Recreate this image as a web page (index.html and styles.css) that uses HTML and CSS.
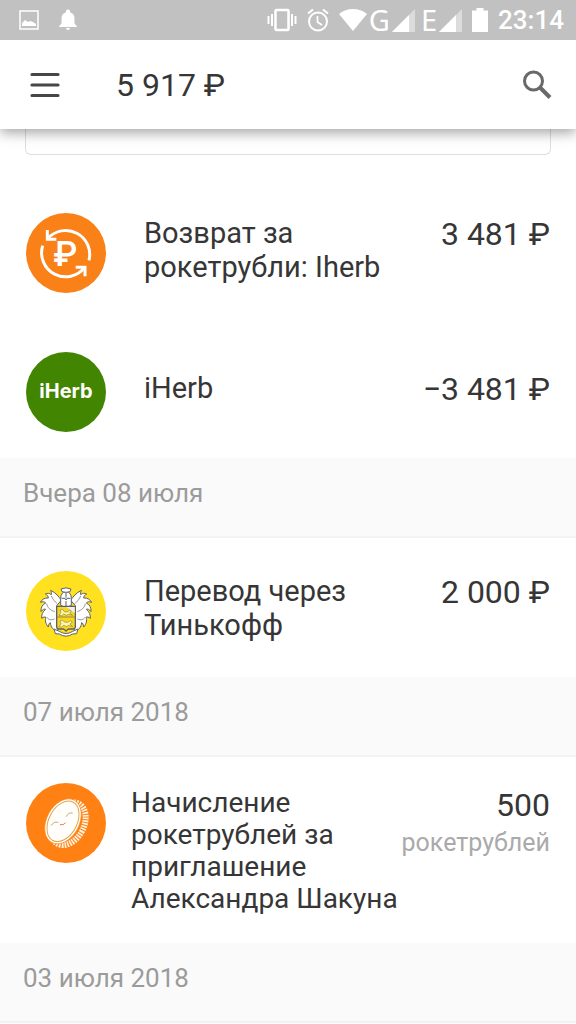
FILE: index.html
```html
<!DOCTYPE html>
<html lang="ru">
<head>
    <meta charset="UTF-8">
    <meta name="viewport" content="width=device-width, initial-scale=1.0">
    <title>История операций</title>
    <link rel="stylesheet" href="styles.css">
</head>
<body>

    <!-- Status bar -->
    <div class="status">
        <div class="status-left">
            <svg width="20" height="20" viewBox="0 0 20 20">
                <rect x="1" y="1" width="18" height="18" fill="none" stroke="#fff" stroke-width="1.5"/>
                <path d="M3 16v-3l3-3 3 2 2-1 3 1 3 2v2z" fill="#fff"/>
            </svg>
            <svg width="18" height="22" viewBox="0 0 18 22">
                <path d="M9 0.5c1.2 0 2 .8 2 2v.8c2.900.8 4.500 3.200 4.500 6.200v5l2.200 2.500v1H.3v-1l2.200-2.500v-5c0-3 1.600-5.400 4.500-6.200v-.8c0-1.200.8-2 2-2zM7 19h4c0 1.200-.9 2-2 2s-2-.8-2-2z" fill="#fff"/>
            </svg>
        </div>
        <div class="status-right">
            <svg width="30" height="24" viewBox="0 0 30 24">
                <rect x="8.500" y="2" width="13" height="20" rx="1" fill="none" stroke="#fff" stroke-width="2.500"/>
                <path d="M1.500 8v8M5 6v12M25 6v12M28.500 8v8" stroke="#fff" stroke-width="2"/>
            </svg>
            <svg width="22" height="24" viewBox="0 0 22 24">
                <circle cx="11" cy="13.500" r="9" fill="none" stroke="#fff" stroke-width="2"/>
                <path d="M10.500 8v6l4.500 3" fill="none" stroke="#fff" stroke-width="1.700"/>
                <path d="M1 5.500L6 1.500M21 5.500L16 1.500" stroke="#fff" stroke-width="2.200"/>
            </svg>
            <svg width="28" height="24" viewBox="0 0 28 24">
                <path d="M0 6C8-.7 20-.7 28 6L14 23z" fill="#fff"/>
            </svg>
            <span class="network">G
                <svg width="23" height="23" viewBox="0 0 23 23">
                    <path d="M23 0V23H0z" fill="#dcdcdc"/>
                    <path d="M17 6V23H0z" fill="#fff"/>
                </svg>
            </span>
            <span class="network">E
                <svg width="23" height="23" viewBox="0 0 23 23">
                    <path d="M23 0V23H0z" fill="#dcdcdc"/>
                    <path d="M17 6V23H0z" fill="#fff"/>
                </svg>
            </span>
            <svg width="16" height="24" viewBox="0 0 16 24">
                <path d="M4.500 0h7v2.500H16V24H0V2.500h4.500z" fill="#fff"/>
            </svg>
            <span class="clock">23:14</span>
        </div>
    </div>

    <header class="header">
        <button class="menu" aria-label="Меню">
            <svg width="30" height="28" viewBox="0 0 30 28">
                <path d="M2 3.500h26M2 14h26M2 24.500h26" stroke="#464646" stroke-width="3.200" stroke-linecap="round"/>
            </svg>
        </button>
        <h1>5 917 ₽</h1>
        <button class="search" aria-label="Поиск">
            <svg width="30" height="30" viewBox="0 0 30 30">
                <circle cx="11.500" cy="11" r="9" fill="none" stroke="#696969" stroke-width="3"/>
                <path d="M18 17.500l10 10" stroke="#696969" stroke-width="4"/>
            </svg>
        </button>
    </header>

    <main>
        <div class="card"></div>

        <div class="row">
            <svg class="icon" viewBox="0 0 240 240">
                <circle cx="120" cy="120" r="120" fill="#f98118"/>
                <g fill="none" stroke="#fff" stroke-width="9">
                    <path d="M189 142A72 72 0 0 0 65 77"/>
                    <path d="M64 51v28h27"/>
                    <path d="M50 98A72 72 0 0 0 176 163"/>
                    <path d="M149 163h28v27"/>
                </g>
                <text class="ruble" x="118" y="158">₽</text>
            </svg>
            <div class="info">
                <p class="name">Возврат за рокетрубли: Iherb</p>
                <p class="amount">3 481 ₽</p>
            </div>
        </div>

        <div class="row">
            <div class="icon iherb">iHerb</div>
            <div class="info">
                <p class="name">iHerb</p>
                <p class="amount">−3 481 ₽</p>
            </div>
        </div>

        <h2>Вчера 08 июля</h2>

        <div class="row">
            <svg class="icon" viewBox="0 0 240 240">
                <defs>
                    <g id="leaves">
                        <path d="M106 88C98 76 90 66 74 58C76 64 77 68 76 71C70 66 64 66 58 69C64 72 67 76 67 81C56 80 48 85 43 94C50 91 56 92 59 96C49 100 44 110 45 122C50 115 55 113 59 115C50 122 46 132 47 142C52 138 57 137 60 139C56 148 59 159 67 168C68 160 70 156 73 155C74 168 82 178 94 181L100 160L92 104z"/>
                        <path d="M76 75C80 84 86 92 94 98M62 98C64 110 74 118 86 122M63 139C68 147 76 148 86 144" fill="none" stroke-width="2"/>
                    </g>
                </defs>
                <circle cx="120" cy="120" r="120" fill="#ffe11f"/>
                <g fill="#fff" stroke="#5d5f6c" stroke-width="3" stroke-linejoin="round">
                    <use href="#leaves"/>
                    <use href="#leaves" transform="translate(240 0) scale(-1 1)"/>
                    <path d="M84 174l16 7q20 13 40 0l16-7-4 14-12 1q-20 13-40 0l-12-1z"/>
                    <path d="M104 103V82q0-18 16-20q16 2 16 20v21l-16 7z"/>
                    <path d="M105 54q15-7 30 0l-3 8q-12 4-24 0z"/>
                    <path d="M107 82h10l3 5 3-5h10M120 66v14M120 90v17" fill="none"/>
                    <path d="M92 106h56v61q0 7-8 7h-13l-7 6-7-6h-13q-8 0-8-7z" fill="#f7d91c" stroke-width="4"/>
                    <path d="M121 108h25v18z" fill="#eeeef0" stroke="none"/>
                    <path d="M94 138h52" fill="none" stroke-width="2"/>
                    <path d="M99 133l6-9-3-7 8-2 5 7 10 1 5-6 6 3-5 6 9 7-11-3-8 3-8-4-6 5z" fill="#fff6a8" stroke="#8b8149" stroke-width="2"/>
                    <path d="M99 167l6-9-3-8 7-3 6 6 10 1 8-5 6 4-7 6 8 8-12-4-6 4-9-4-6 5z" fill="#fff6a8" stroke="#8b8149" stroke-width="2"/>
                </g>
            </svg>
            <div class="info">
                <p class="name">Перевод через Тинькофф</p>
                <p class="amount">2 000 ₽</p>
            </div>
        </div>

        <h2>07 июля 2018</h2>

        <div class="row bonus">
            <svg class="icon" viewBox="0 0 240 240">
                <circle cx="120" cy="120" r="120" fill="#ff8114"/>
                <g transform="rotate(28 124 123)">
                    <ellipse cx="126" cy="121" rx="47" ry="68" fill="none" stroke="#fff2dc" stroke-width="18" stroke-dasharray="5 3"/>
                </g>
                <g transform="rotate(28 111 115)">
                    <ellipse cx="111" cy="115" rx="49" ry="72" fill="#fff" stroke="#ff8114" stroke-width="2"/>
                    <ellipse cx="111" cy="115" rx="42" ry="65" fill="#fffefa" stroke="#dfa64a" stroke-width="3"/>
                </g>
                <path d="M76 127q7-13 20-9M121 100q5-12 18-10" fill="none" stroke="#c8ac7c" stroke-width="3" stroke-linecap="round"/>
                <path d="M103 125q9 4 15-5" fill="none" stroke="#ee7c5c" stroke-width="3" stroke-linecap="round"/>
            </svg>
            <div class="info">
                <p class="name">Начисление рокетрублей за приглашение Александра Шакуна</p>
                <p class="amount">500 <small>рокетрублей</small></p>
            </div>
        </div>

        <h2>03 июля 2018</h2>
    </main>

</body>
</html>
```
FILE: styles.css
```css
* {
    margin: 0;
    padding: 0;
    box-sizing: border-box;
}

body {
    background-color: #fff;
    color: #363636;
    font-family: Roboto, sans-serif;
}

svg {
    display: block;
    flex-shrink: 0;
}

button {
    background: none;
    border: none;
    cursor: pointer;
}

/* Status bar */
.status {
    display: flex;
    justify-content: space-between;
    align-items: center;
    height: 40px;
    padding: 0 12px 0 19px;
    background-color: #c1c1c1;
    color: #fff;
}

.status-left {
    display: flex;
    align-items: center;
    gap: 20px;
}

.status-right {
    display: flex;
    align-items: center;
    gap: 10px;
}

.network {
    display: flex;
    align-items: center;
    gap: 2px;
    margin-left: -8px;
    font-family: "Noto Sans", sans-serif;
    font-size: 29px;
    line-height: 40px;
}

.network + .network {
    margin-left: -4px;
}

.clock {
    font-size: 26px;
    font-weight: 500;
    line-height: 40px;
}

/* Header */
.header {
    position: relative;
    display: flex;
    align-items: center;
    height: 89px;
    padding: 0 24px 0 30px;
    background-color: #fff;
    box-shadow: 0 4px 12px rgba(0, 0, 0, 0.35);
    clip-path: inset(0 0 -24px);
}

.header h1 {
    flex: 1;
    margin-left: 56px;
    font-size: 32px;
    font-weight: 400;
    line-height: 36px;
}

.card {
    height: 26px;
    margin: 0 25px 25px;
    border: 1px solid #dedede;
    border-top: none;
    border-radius: 0 0 6px 6px;
}

/* Operations */
.row {
    display: flex;
    align-items: center;
    gap: 38px;
    padding: 33px 26px 26px;
}

.icon {
    width: 80px;
    height: 80px;
    flex-shrink: 0;
}

.iherb {
    border-radius: 50%;
    background-color: #428500;
    color: #fff;
    font-family: Inter, sans-serif;
    font-size: 20px;
    font-weight: 700;
    line-height: 78px;
    text-align: center;
}

.ruble {
    fill: #fff;
    font-size: 104px;
    font-weight: 500;
    text-anchor: middle;
}

.info {
    display: flex;
    align-items: flex-start;
    flex: 1;
    padding-bottom: 6px;
}

.name {
    flex: 1;
    font-size: 29px;
    line-height: 34px;
}

.amount {
    font-size: 32px;
    line-height: 36px;
    text-align: right;
    white-space: nowrap;
}

.amount small {
    display: block;
    color: #aaa;
    font-size: 25px;
    line-height: 40px;
}

.bonus {
    align-items: flex-start;
    gap: 25px;
    padding: 26px 26px 28px;
}

.bonus .info {
    padding: 4px 0 0;
}

.bonus .name {
    font-size: 28px;
    line-height: 32px;
}

h2 {
    padding: 16px 23px 23px;
    border-bottom: 2px solid #f3f3f3;
    background-color: #fafafa;
    color: #9b9b9b;
    font-size: 26px;
    font-weight: 400;
    line-height: 39px;
}
```
